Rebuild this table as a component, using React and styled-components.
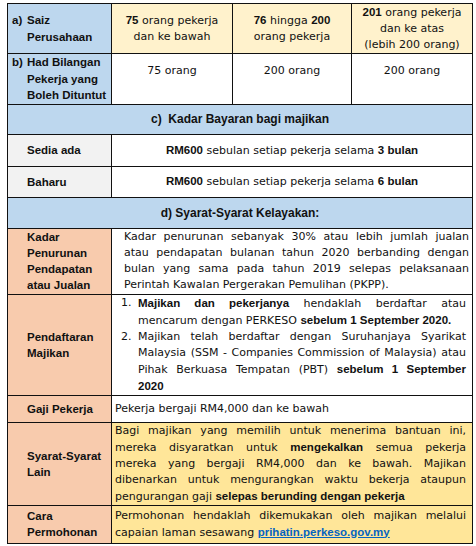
import React from 'react'
import styled, { createGlobalStyle } from 'styled-components'

const GlobalStyle = createGlobalStyle`
  body {
    margin: 0;
    padding: 3px 0 0 7px;
    background: #fff;
    color: #111;
    font-family: "DejaVu Sans", sans-serif;
    font-size: 11px;
  }
`

const colors = {
  blue: '#bdd7ee',
  cream: '#fff2cc',
  peach: '#f8cbad',
  gray: '#f2f2f2',
  gold: '#ffe699',
  white: '#fff'
}

const Table = styled.table`
  border-collapse: collapse;
  table-layout: fixed;
  width: 465px;
  border: 1.5px solid #111;
  line-height: 16px;
`

const Row = styled.tr`
  height: ${p => p.$h}px;
`

const Cell = styled.td`
  border: 1px solid #111;
  padding: ${p => p.$pad || '0'};
  background: ${p => colors[p.$bg || 'white']};
  text-align: ${p => p.$align || 'left'};
  vertical-align: ${p => p.$valign || 'middle'};
`

const LabelCell = styled(Cell)`
  padding-left: 19px;
  font-family: "Liberation Sans", Arial, sans-serif;
  font-size: 11.5px;
  font-weight: 700;
  background: ${p => colors[p.$bg || 'peach']};
`

const HeadCell = styled(Cell)`
  background: ${colors.blue};
  text-align: center;
  font-family: "Liberation Sans", Arial, sans-serif;
  font-size: 12px;
  font-weight: 700;
`

const B = styled.b`
  font-family: "Liberation Sans", Arial, sans-serif;
  font-size: 11.5px;
  font-weight: 700;
`

const Link = styled.a`
  font-family: "Liberation Sans", Arial, sans-serif;
  font-size: 11.5px;
  font-weight: 700;
  color: #0563c1;
  text-decoration: underline;
`

const Marked = styled.div`
  display: flex;
  padding-left: 4px;
  line-height: 16.5px;
`

const Marker = styled.span`
  flex: 0 0 15px;
`

const Line = styled.div`
  white-space: nowrap;
  text-align: justify;
  text-align-last: ${p => (p.$last ? 'left' : 'justify')};
`

const Item = styled.div`
  display: flex;
`

const Num = styled.span`
  flex: 0 0 17px;
`

const ItemBody = styled.div`
  flex: 1;
  min-width: 0;
`

const Lines = ({ lines }) => (
  <>
    {lines.map((l, i) => (
      <Line key={i} $last={i === lines.length - 1}>{l}</Line>
    ))}
  </>
)

const App = () => {
  return (
    <>
      <GlobalStyle />
      <Table>
        <colgroup>
          <col style={{ width: 104 }} />
          <col style={{ width: 121 }} />
          <col style={{ width: 119 }} />
          <col style={{ width: 121 }} />
        </colgroup>
        <tbody>
          <Row $h={49}>
            <LabelCell $bg="blue" style={{ paddingLeft: 0 }}>
              <Marked><Marker>a)</Marker><span>Saiz<br />Perusahaan</span></Marked>
            </LabelCell>
            <Cell $bg="cream" $align="center"><B>75</B> orang pekerja<br />dan ke bawah</Cell>
            <Cell $bg="cream" $align="center"><B>76</B> hingga <B>200</B><br />orang pekerja</Cell>
            <Cell $bg="cream" $align="center"><B>201</B> orang pekerja<br />dan ke atas<br />(lebih 200 orang)</Cell>
          </Row>
          <Row $h={50}>
            <LabelCell $bg="blue" style={{ paddingLeft: 0 }}>
              <Marked><Marker>b)</Marker><span>Had Bilangan<br />Pekerja yang<br />Boleh Dituntut</span></Marked>
            </LabelCell>
            <Cell $align="center" $valign="top" $pad="9px 0 0">75 orang</Cell>
            <Cell $align="center" $valign="top" $pad="9px 0 0">200 orang</Cell>
            <Cell $align="center" $valign="top" $pad="9px 0 0">200 orang</Cell>
          </Row>
          <Row $h={30}>
            <HeadCell colSpan={4}>c)&nbsp; Kadar Bayaran bagi majikan</HeadCell>
          </Row>
          <Row $h={32}>
            <LabelCell $bg="gray">Sedia ada</LabelCell>
            <Cell colSpan={3} $align="center"><B>RM600</B> sebulan setiap pekerja selama <B>3 bulan</B></Cell>
          </Row>
          <Row $h={31}>
            <LabelCell $bg="gray">Baharu</LabelCell>
            <Cell colSpan={3} $align="center"><B>RM600</B> sebulan setiap pekerja selama <B>6 bulan</B></Cell>
          </Row>
          <Row $h={31}>
            <HeadCell colSpan={4}>d) Syarat-Syarat Kelayakan:</HeadCell>
          </Row>
          <Row $h={66}>
            <LabelCell>Kadar<br />Penurunan<br />Pendapatan<br />atau Jualan</LabelCell>
            <Cell colSpan={3} $pad="0 3px 0 12px">
              <Lines lines={[
                'Kadar penurunan sebanyak 30% atau lebih jumlah jualan',
                'atau pendapatan bulanan tahun 2020 berbanding dengan',
                'bulan yang sama pada tahun 2019 selepas pelaksanaan',
                'Perintah Kawalan Pergerakan Pemulihan (PKPP).'
              ]} />
            </Cell>
          </Row>
          <Row $h={101}>
            <LabelCell>Pendaftaran<br />Majikan</LabelCell>
            <Cell colSpan={3} $pad="0 6px 0 9px">
              <Item>
                <Num>1.</Num>
                <ItemBody>
                  <Lines lines={[
                    <><B>Majikan dan pekerjanya</B> hendaklah berdaftar atau</>,
                    <>mencarum dengan PERKESO <B>sebelum 1 September 2020.</B></>
                  ]} />
                </ItemBody>
              </Item>
              <Item>
                <Num>2.</Num>
                <ItemBody>
                  <Lines lines={[
                    'Majikan telah berdaftar dengan Suruhanjaya Syarikat',
                    'Malaysia (SSM - Companies Commission of Malaysia) atau',
                    <>Pihak Berkuasa Tempatan (PBT) <B>sebelum 1 September</B></>,
                    <B>2020</B>
                  ]} />
                </ItemBody>
              </Item>
            </Cell>
          </Row>
          <Row $h={27}>
            <LabelCell>Gaji Pekerja</LabelCell>
            <Cell colSpan={3} $pad="0 6px 0 3px">Pekerja bergaji RM4,000 dan ke bawah</Cell>
          </Row>
          <Row $h={83}>
            <LabelCell>Syarat-Syarat<br />Lain</LabelCell>
            <Cell colSpan={3} $bg="gold" $pad="0 6px 0 3px">
              <Lines lines={[
                'Bagi majikan yang memilih untuk menerima bantuan ini,',
                <>mereka disyaratkan untuk <B>mengekalkan</B> semua pekerja</>,
                'mereka yang bergaji RM4,000 dan ke bawah. Majikan',
                'dibenarkan untuk mengurangkan waktu bekerja ataupun',
                <>pengurangan gaji <B>selepas berunding dengan pekerja</B></>
              ]} />
            </Cell>
          </Row>
          <Row $h={38}>
            <LabelCell $valign="top" $pad="2px 0 0">Cara<br />Permohonan</LabelCell>
            <Cell colSpan={3} $bg="gold" $valign="top" $pad="2px 6px 0 3px">
              <Lines lines={[
                'Permohonan hendaklah dikemukakan oleh majikan melalui',
                <>capaian laman sesawang <Link href="#">prihatin.perkeso.gov.my</Link></>
              ]} />
            </Cell>
          </Row>
        </tbody>
      </Table>
    </>
  )
}

export default App
